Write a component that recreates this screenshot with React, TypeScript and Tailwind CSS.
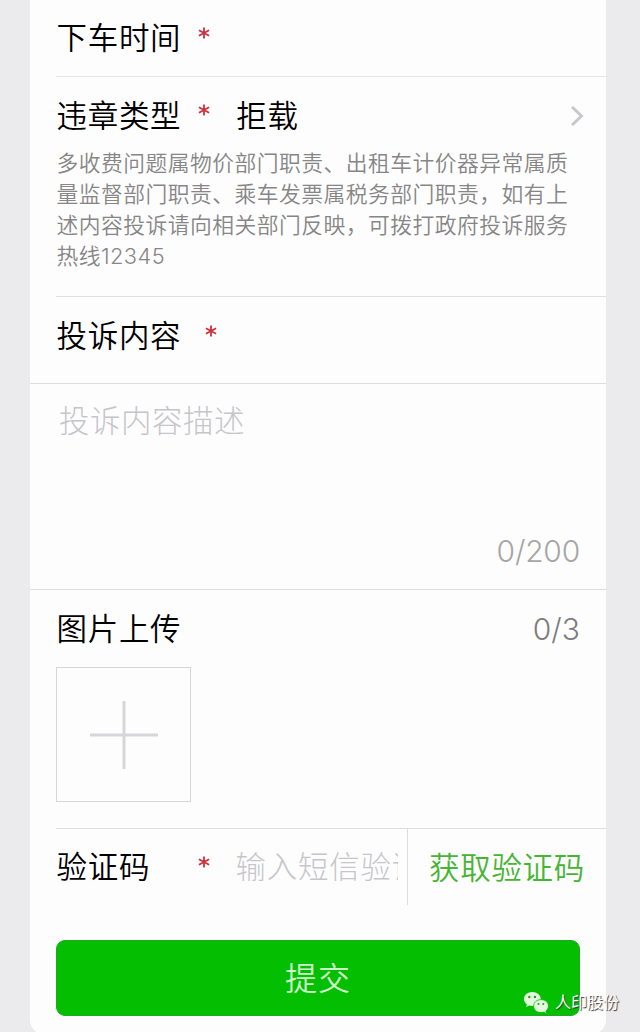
import { useState } from 'react';
import clsx from 'clsx';

const UPLOAD_LIMIT = 3;
const CONTENT_LIMIT = 200;

function Required({ className }: { className?: string }) {
  return (
    <svg viewBox="0 0 12 12" className={clsx('h-3 w-3 shrink-0 stroke-[#cf2f3c]', className)} fill="none" strokeWidth="1.8">
      <path d="M6 0.4v11.2M0.9 3.2l10.2 5.6M11.1 3.2L0.9 8.800" />
    </svg>
  );
}

function Label({ children }: { children: string }) {
  return <span className="ml-[0.5px] text-[30.5px] leading-[44px] font-[350] tracking-[0.7px] whitespace-nowrap text-black">{children}</span>;
}

function WechatIcon() {
  return (
    <svg viewBox="0 0 26 24" className="h-6 w-[26px]">
      <path fill="#e4fadf" d="M9.3 1C4.5 1 1 4.1 1 8c0 2.200 1.100 4.100 2.900 5.400l-.8 2.700 3-1.600c1 .3 2.100.5 3.300.5C14 15 17.700 12 17.700 8S14 1 9.300 1z" />
      <path
        fill="#e4fadf"
        stroke="#04be02"
        strokeWidth="0.8"
        d="M18 8.600c-4.300 0-7.400 2.900-7.400 6.500s3.100 6.500 7.400 6.500c1 0 1.900-.2 2.700-.5l2.900 1.600-.7-2.600c1.500-1.200 2.500-3 2.500-5 0-3.600-3.100-6.500-7.400-6.500z"
      />
      <g fill="#219d20">
        <circle cx="6.300" cy="6" r="1.200" />
        <circle cx="12" cy="6" r="1.200" />
        <circle cx="15.500" cy="13" r="1" />
        <circle cx="20.300" cy="13" r="1" />
      </g>
    </svg>
  );
}

export default function App() {
  const [content, setContent] = useState('');
  const [code, setCode] = useState('');
  const [images] = useState<string[]>([]);

  return (
    <div className="relative h-[1032px] w-[640px] overflow-hidden bg-[#ebeaec] pr-[34px] pl-[30px] font-['Inter','Noto_Sans_CJK_SC',sans-serif]">
      <form className="h-[1034px] rounded-b-[14px] bg-[#fefdfe]" onSubmit={e => e.preventDefault()}>
        <div className="ml-[26px] flex h-[77px] border-b border-[#e6e6e8] pt-[16px]">
          <Label>下车时间</Label>
          <Required className="mt-[11px] ml-[16.5px]" />
        </div>

        <div className="ml-[26px] h-[220px] border-b border-[#e0e0e3] pt-[17px]">
          <div className="flex">
            <Label>违章类型</Label>
            <Required className="mt-[10px] ml-[16.5px]" />
            <span className="ml-[26.5px] text-[30.5px] leading-[44px] font-[350] tracking-[0.7px] text-black">拒载</span>
            <svg viewBox="0 0 14 20" className="mt-[12px] mr-[22px] ml-auto h-5 w-3.5 stroke-[#c8c8cc]" fill="none" strokeWidth="3">
              <path d="M2 1l9.5 9L2 19" />
            </svg>
          </div>
          <p className="mt-[10px] pl-[0.5px] text-[21.8px] leading-[31px] font-[350] tracking-[0.45px] whitespace-nowrap text-[#868686]">
            多收费问题属物价部门职责、出租车计价器异常属质
            <br />
            量监督部门职责、乘车发票属税务部门职责，如有上
            <br />
            述内容投诉请向相关部门反映，可拨打政府投诉服务
            <br />
            热线12345
          </p>
        </div>

        <div className="flex h-[86px] pt-[17px] pl-[26px]">
          <Label>投诉内容</Label>
          <Required className="mt-[11px] ml-[23.5px]" />
        </div>

        <div className="flex h-[207px] flex-col border-y border-[#dddde0] pt-[15px] pr-[26px] pl-[29px]">
          <textarea
            value={content}
            onChange={e => setContent(e.target.value)}
            maxLength={CONTENT_LIMIT}
            placeholder="投诉内容描述"
            className="h-[120px] w-full resize-none text-[30.5px] leading-[44px] font-light tracking-[0.5px] placeholder:text-[#c6c6ca] focus:outline-none"
          />
          <span className="mt-[10px] text-right text-[30px] leading-[44px] font-light tracking-[-0.2px] text-[#a6a6a6]">
            {content.length}/{CONTENT_LIMIT}
          </span>
        </div>

        <div className="ml-[26px] h-[239px] border-b border-[#dddde0] pt-[17px]">
          <div className="flex justify-between pr-[26px]">
            <Label>图片上传</Label>
            <span className="text-[30px] leading-[44px] font-light text-[#7c7c7c]">
              {images.length}/{UPLOAD_LIMIT}
            </span>
          </div>
          <button type="button" className="mt-[16px] flex h-[135px] w-[135px] items-center justify-center border border-[#d6d6da]">
            <svg viewBox="0 0 68 68" className="h-[68px] w-[68px] stroke-[#d6d6d9]" strokeWidth="3">
              <path d="M34 0v68M0 34h68" />
            </svg>
          </button>
        </div>

        <div className="ml-[26px] flex h-[76px]">
          <div className="flex w-[351px] pt-[16px]">
            <Label>验证码</Label>
            <Required className="mt-[11px] ml-[47.5px]" />
            <input
              value={code}
              onChange={e => setCode(e.target.value)}
              placeholder="输入短信验证码"
              className="ml-[26px] h-[44px] w-[162px] text-[30.5px] leading-[44px] font-light tracking-[0.7px] placeholder:text-[#c6c6ca] focus:outline-none"
            />
          </div>
          <button
            type="button"
            className="flex-1 border-l border-[#dddde0] pt-[2px] pl-[21px] text-left text-[30.5px] leading-[44px] font-[350] tracking-[0.7px] whitespace-nowrap text-[#46b534]"
          >
            获取验证码
          </button>
        </div>

        <button
          type="submit"
          className="mt-[35px] ml-[26px] block h-[76px] w-[524px] rounded-[9px] border border-[#1fa81d] bg-[#04be02] pt-[2px] text-[32px] font-[350] tracking-[1px] text-[#cdf5c8]"
        >
          提交
        </button>
      </form>

      <div className="absolute top-[989px] left-[523px] flex items-center">
        <WechatIcon />
        <span className="ml-[6px] text-[16px] leading-[27px] whitespace-nowrap text-white [text-shadow:1px_1px_1px_#333]">人印股份</span>
      </div>
    </div>
  );
}
